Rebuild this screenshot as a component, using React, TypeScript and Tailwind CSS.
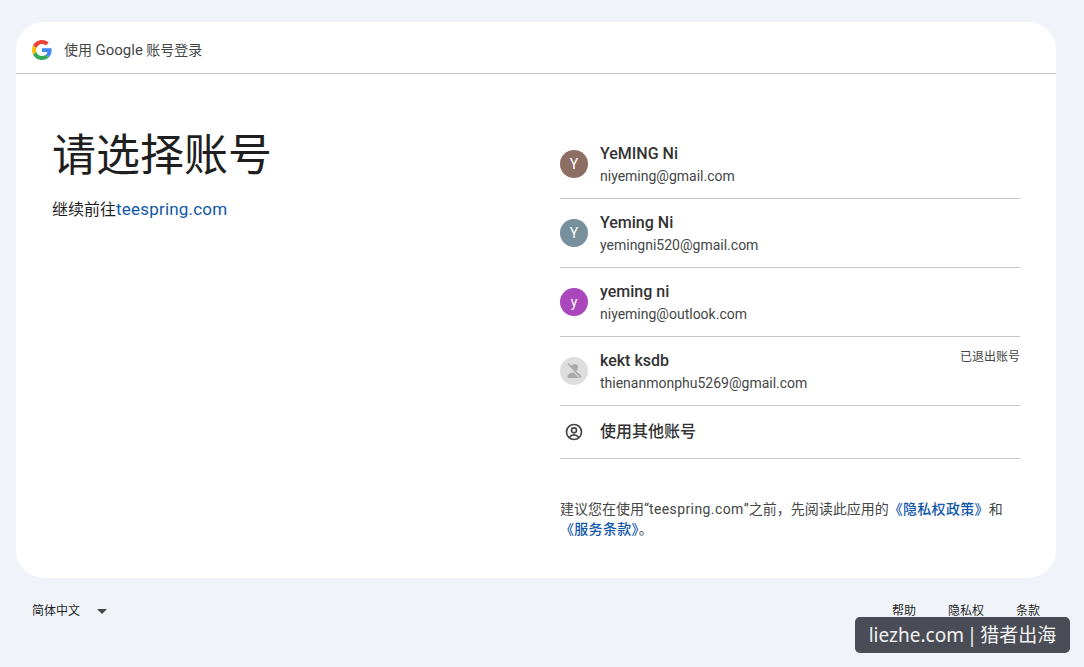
const sans = "font-['Roboto','Noto_Sans_CJK_SC',sans-serif]";
const linkColor = "text-[#0f57a8]";

const accounts = [
  { name: "YeMING Ni", email: "niyeming@gmail.com", letter: "Y", color: "bg-[#8d6e63]" },
  { name: "Yeming Ni", email: "yemingni520@gmail.com", letter: "Y", color: "bg-[#78909c]" },
  { name: "yeming ni", email: "niyeming@outlook.com", letter: "y", color: "bg-[#ab47bc]" },
];

function GoogleLogo() {
  return (
    <svg width="20" height="20" viewBox="0 0 48 48">
      <path fill="#EA4335" d="M24 9.5c3.54 0 6.71 1.22 9.21 3.6l6.85-6.85C35.9 2.38 30.47 0 24 0 14.62 0 6.51 5.38 2.56 13.22l7.98 6.19C12.43 13.72 17.74 9.5 24 9.5z" />
      <path fill="#4285F4" d="M46.98 24.55c0-1.57-.15-3.09-.38-4.55H24v9.02h12.94c-.58 2.96-2.26 5.48-4.78 7.18l7.73 6c4.51-4.18 7.09-10.36 7.09-17.65z" />
      <path fill="#FBBC05" d="M10.53 28.59c-.48-1.45-.76-2.99-.76-4.59s.27-3.14.76-4.59l-7.98-6.19C.92 16.46 0 20.12 0 24c0 3.88.92 7.54 2.56 10.78l7.97-6.19z" />
      <path fill="#34A853" d="M24 48c6.48 0 11.93-2.13 15.89-5.81l-7.73-6c-2.15 1.45-4.92 2.3-8.16 2.3-6.26 0-11.57-4.22-13.47-9.91l-7.98 6.19C6.51 42.62 14.62 48 24 48z" />
    </svg>
  );
}

function SignedOutAvatar() {
  return (
    <svg width="28" height="28" viewBox="0 0 28 28" className="shrink-0">
      <circle cx="14" cy="14" r="14" fill="#dedede" />
      <circle cx="14.5" cy="10.5" r="3.5" fill="#a9a9a9" />
      <path fill="#a9a9a9" d="M7.5 19.5c0-2.6 4.2-4 7-4s6.5 1.4 6.5 4v1.500h-13.500z" />
      <path stroke="#dedede" strokeWidth="2.500" d="M7 6.500l14 15" />
      <path stroke="#a9a9a9" strokeWidth="1.500" d="M8 6.500l13 14" />
    </svg>
  );
}

function Row({ children, last }: { children: React.ReactNode; last?: boolean }) {
  return (
    <div className={"relative flex items-center border-b border-[#c4c7c5] " + (last ? "h-[53px]" : "h-[69px]")}>
      {children}
    </div>
  );
}

function AccountText({ name, email }: { name: string; email: string }) {
  return (
    <div className="ml-3 flex flex-col">
      <div className="text-[16px] leading-[22px] font-medium text-[#333333]">{name}</div>
      <div className="mt-[1px] text-[14px] leading-[20px] text-[#444746]">{email}</div>
    </div>
  );
}

export default function App() {
  return (
    <div className={"flex h-[667px] w-[1084px] flex-col overflow-hidden bg-[#f0f4f9] pt-[22px] " + sans}>
      <div className="relative ml-4 h-[556px] w-[1040px] rounded-[28px] bg-white">
        <header className="flex h-[52px] items-center gap-3 border-b border-[#c4c7c5] pl-4 pt-[5px]">
          <GoogleLogo />
          <span className="text-[14px] text-[#444746]">
            使用 <span className="text-[15px]">Google</span> 账号登录
          </span>
        </header>

        <div className="flex">
          <div className="w-[544px] pl-[36px] pt-[56px]">
            <h1 className="text-[44px] leading-[52px] font-normal text-[#1f1f1f]">请选择账号</h1>
            <p className="mt-[15px] text-[16px] leading-[24px] text-[#1f1f1f]">
              继续前往<span className={"text-[17px] tracking-[0.2px] " + linkColor}>teespring.com</span>
            </p>
          </div>

          <div className="w-[460px] pt-[56px]">
            {accounts.map((a) => (
              <Row key={a.email}>
                <div className={"flex h-7 w-7 shrink-0 items-center justify-center rounded-full text-[14px] text-white " + a.color}>
                  {a.letter}
                </div>
                <AccountText name={a.name} email={a.email} />
              </Row>
            ))}
            <Row>
              <SignedOutAvatar />
              <AccountText name="kekt ksdb" email="thienanmonphu5269@gmail.com" />
              <span className="absolute right-0 top-[12px] text-[12px] leading-4 text-[#444746]">已退出账号</span>
            </Row>
            <Row last>
              <div className="flex w-7 justify-center">
                <svg width="20" height="20" viewBox="0 0 24 24" fill="none" stroke="#444746" strokeWidth="2">
                  <circle cx="12" cy="12" r="9" />
                  <circle cx="12" cy="10" r="3" />
                  <path d="M6.500 18.500c1.300-2 3.300-3 5.500-3s4.200 1 5.500 3" />
                </svg>
              </div>
              <span className="ml-3 text-[16px] font-medium text-[#333333]">使用其他账号</span>
            </Row>
            <p className="mt-[40px] text-[14px] leading-[20px] text-[#444746]">
              建议您在使用“<span className="tracking-[0.4px]">teespring.com</span>”之前，先阅读此应用的
              <span className={"font-medium tracking-[0.3px] " + linkColor}>《隐私权政策》</span>和
              <span className={"font-medium tracking-[0.3px] " + linkColor}>《服务条款》</span>。
            </p>
          </div>
        </div>
      </div>

      <footer className="relative ml-4 flex h-[66px] w-[1040px] items-center justify-between text-[12px] text-[#1f1f1f]">
        <div className="flex items-center pl-4">
          <span>简体中文</span>
          <svg width="10" height="5" viewBox="0 0 10 5" className="ml-[17px]">
            <path fill="#444746" d="M0 0h10L5 5z" />
          </svg>
        </div>
        <div className="flex gap-8 pr-4">
          <span>帮助</span>
          <span>隐私权</span>
          <span>条款</span>
        </div>
        <div className="absolute right-[-14px] top-[39px] flex h-[36px] w-[215px] items-center justify-center rounded-[5px] bg-[#4a4d55] font-['Noto_Sans','Noto_Sans_CJK_SC',sans-serif] text-[19px] [word-spacing:-2px] text-[#f2f2f2]">
          liezhe.com | 猎者出海
        </div>
      </footer>
    </div>
  );
}
